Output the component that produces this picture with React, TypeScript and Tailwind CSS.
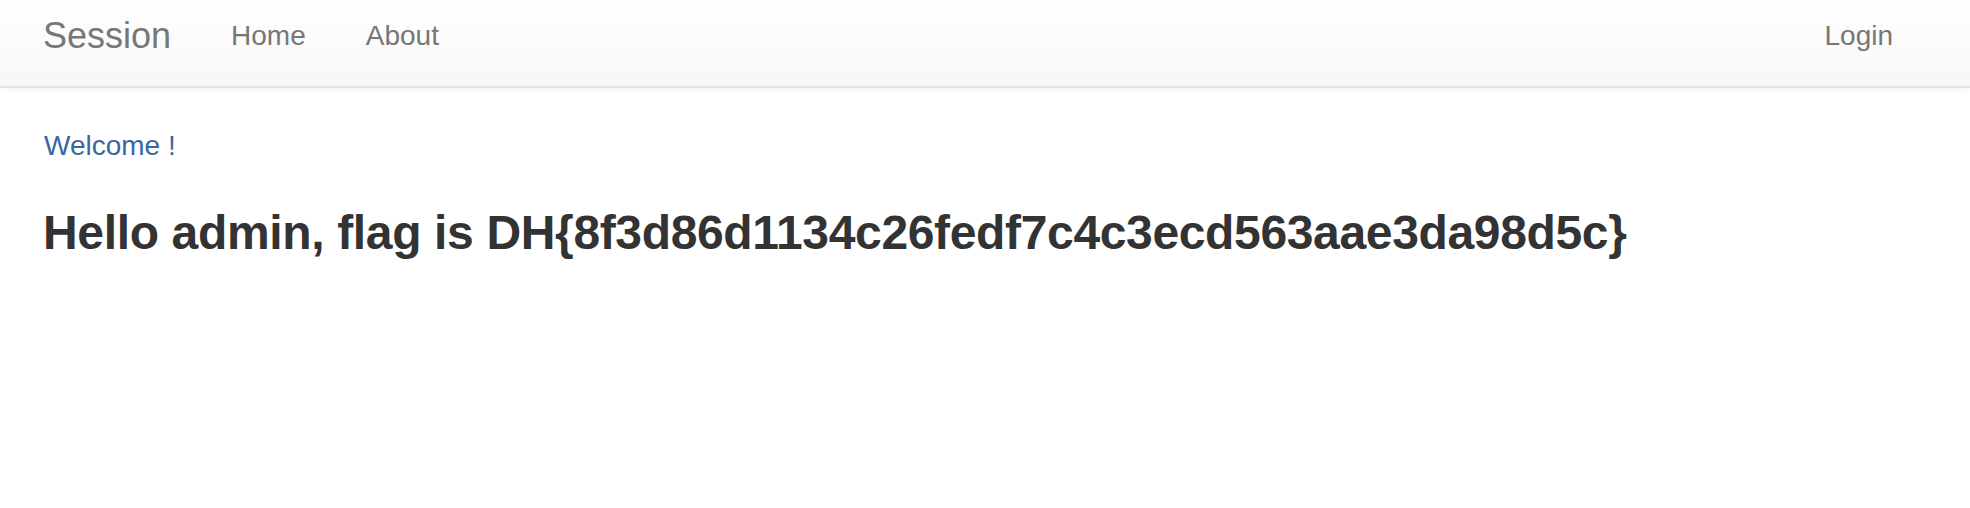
export default function App() {
  const font = { fontFamily: '"Liberation Sans", Arial, Helvetica, sans-serif' };
  return (
    <div className="h-[508px] overflow-hidden bg-white" style={font}>
      <nav className="h-[88px] border-b-2 border-[#e2e2e2] bg-gradient-to-b from-white to-[#f7f7f7] shadow-[0_1px_5px_rgba(0,0,0,0.06)] pl-[43px] pr-[47px] pt-[16px] flex items-start">
        <a className="text-[36px] leading-[40px] text-[#777777] pr-[30px]">Session</a>
        <a className="text-[28px] leading-[40px] text-[#777777] px-[30px]">Home</a>
        <a className="text-[28px] leading-[40px] text-[#777777] px-[30px]">About</a>
        <div className="flex-1" />
        <a className="text-[28px] leading-[40px] text-[#777777] px-[30px]">Login</a>
      </nav>
      <div className="px-[44px] pt-[38px]">
        <p className="text-[28px] leading-[40px] text-[#3a679e]">Welcome !</p>
        <h3 className="mt-[41px] text-[48px] leading-[52.8px] font-bold tracking-[-0.35px] text-[#333333] -ml-[1px]">
          Hello admin, flag is DH{'{'}8f3d86d1134c26fedf7c4c3ecd563aae3da98d5c{'}'}
        </h3>
      </div>
    </div>
  );
}
